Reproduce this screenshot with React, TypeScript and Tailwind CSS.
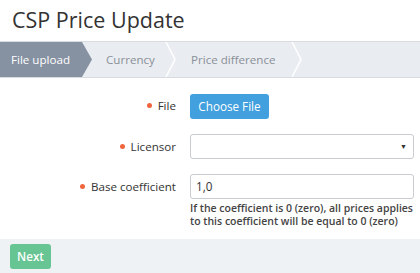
import React from "react";

export default function App() {
  return (
    <div className="h-[273px] w-[420px] overflow-hidden bg-white font-['Open_Sans',sans-serif] text-[#333]">
      <h1 className="h-[41px] pl-[12px] pt-[6px] text-[21.5px] leading-[28px] text-[#333]">
        CSP Price Update
      </h1>
      <Steps />
      <div className="flex flex-col gap-[15px] pt-[15px]">
        <Row label="File">
          <button className="h-[25px] w-[79px] rounded-[3px] bg-[#41a0dd] text-[11.7px] text-white">
            Choose File
          </button>
        </Row>
        <Row label="Licensor">
          <div className="flex h-[25px] w-[224px] items-center justify-end rounded-[3px] border border-[#c8ccd2] pr-[6px]">
            <span className="text-[7px] text-[#333]">▼</span>
          </div>
        </Row>
        <Row label="Base coefficient">
          <div className="flex flex-col">
            <div className="flex h-[25px] w-[224px] items-center rounded-[3px] border border-[#c8ccd2] px-[5px] text-[11.7px]">
              1,0
            </div>
            <p className="mt-[3px] whitespace-nowrap text-[10.5px] font-semibold leading-[12.5px] text-[#444]">
              If the coefficient is 0 (zero), all prices applies
              <br />
              to this coefficient will be equal to 0 (zero)
            </p>
          </div>
        </Row>
      </div>
      <div className="mt-[12px] flex h-[35px] items-center bg-[#eff2f5] pl-[10px]">
        <button className="h-[25px] w-[41px] rounded-[3px] bg-[#66c592] text-[11.7px] font-semibold text-white">
          Next
        </button>
      </div>
    </div>
  );
}

function Steps() {
  return (
    <div className="flex h-[37px] border-y border-[#d8dce1] bg-[#e9ecf0] text-[11.6px]">
      <div className="flex w-[82px] items-center bg-[#8691a1] pl-[11px] text-white">
        File upload
      </div>
      <svg width="10" height="35" viewBox="0 0 10 35" className="block">
        <polygon points="0,0 10,17.5 0,35" fill="#8691a1" />
      </svg>
      <div className="flex w-[73px] items-center pl-[14px] text-[#8a9099]">
        Currency
      </div>
      <Chevron />
      <div className="flex w-[114px] items-center pl-[14px] text-[#8a9099]">
        Price difference
      </div>
      <Chevron />
    </div>
  );
}

function Chevron() {
  return (
    <svg width="12" height="35" viewBox="0 0 12 35" className="block">
      <polyline points="1,0 10,17.5 1,35" fill="none" stroke="#fff" strokeWidth="1.5" />
    </svg>
  );
}

function Row({ label, children }: { label: string; children: React.ReactNode }) {
  return (
    <div className="flex items-start">
      <div className="flex h-[25px] w-[176px] items-center justify-end text-[11.6px] text-[#333]">
        <span className="mr-[6px] h-[5px] w-[5px] rounded-full bg-[#f0653d]" />
        {label}
      </div>
      <div className="ml-[14px]">{children}</div>
    </div>
  );
}
